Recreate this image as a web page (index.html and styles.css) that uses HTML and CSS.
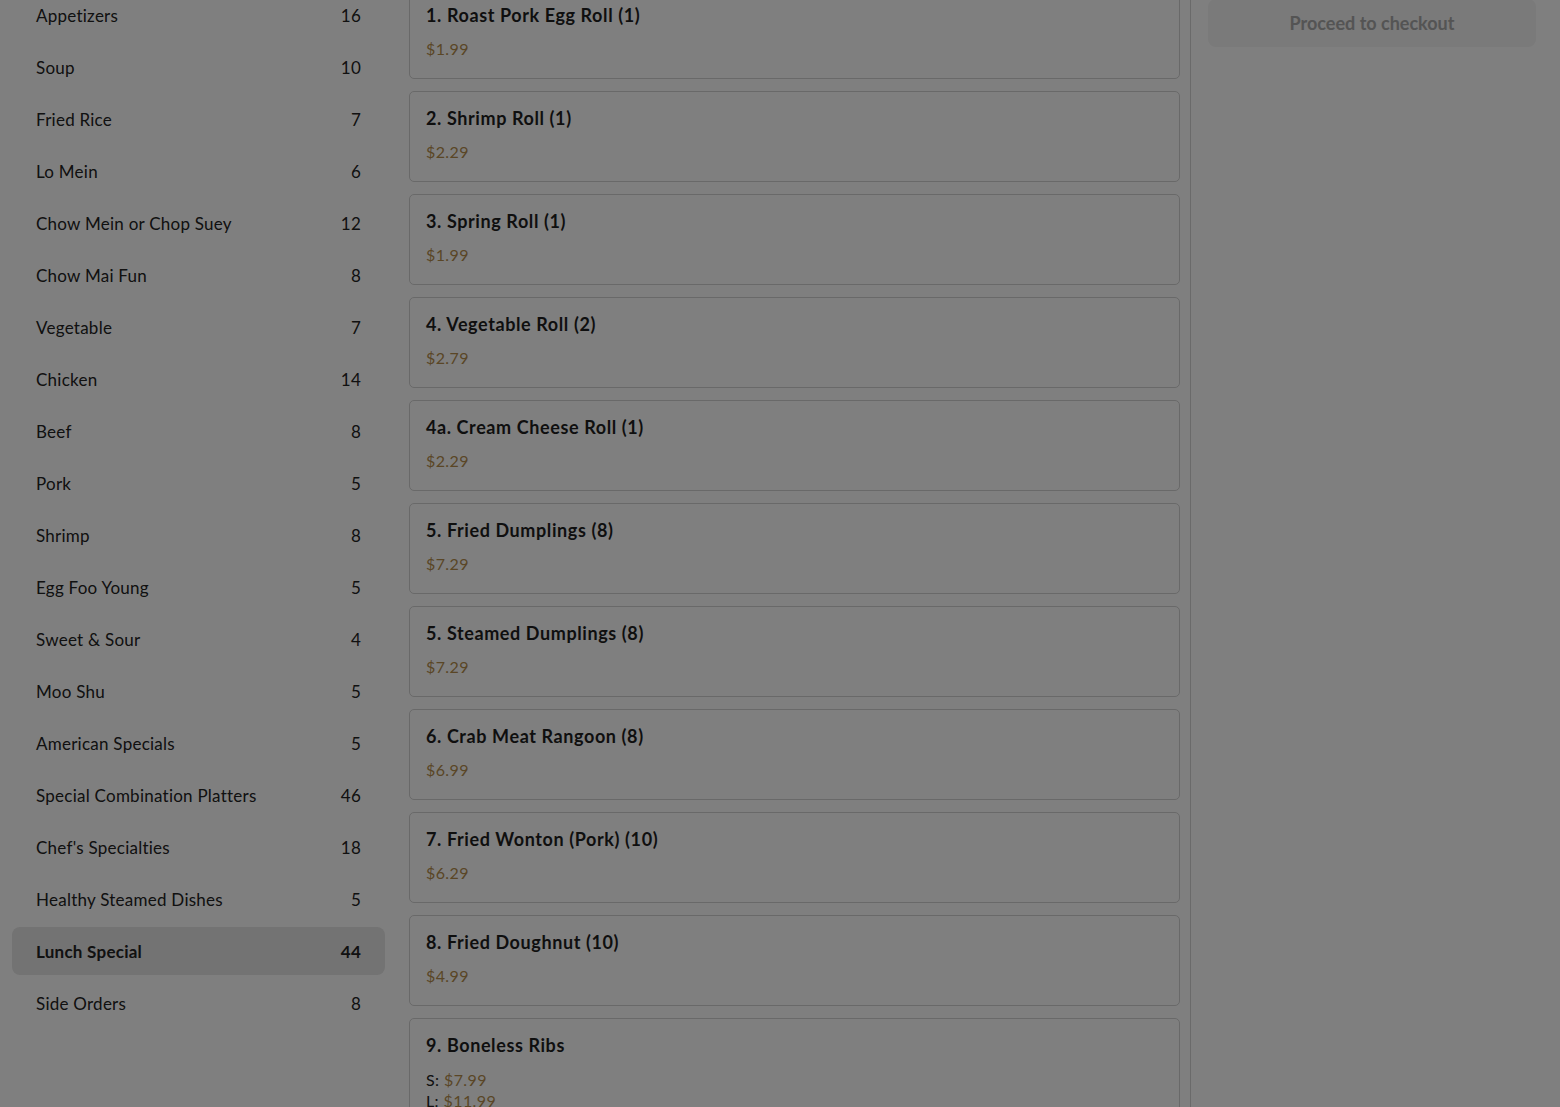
FILE: index.html
```html
<!DOCTYPE html>
<html lang="en">
<head>
<meta charset="utf-8">
<title>Menu</title>
<link rel="stylesheet" href="styles.css">
</head>
<body>
<div class="page">
  <aside class="sidebar">
    <ul class="cats">
      <li class="cat"><span>Appetizers</span><span>16</span></li>
      <li class="cat"><span>Soup</span><span>10</span></li>
      <li class="cat"><span>Fried Rice</span><span>7</span></li>
      <li class="cat"><span>Lo Mein</span><span>6</span></li>
      <li class="cat"><span>Chow Mein or Chop Suey</span><span>12</span></li>
      <li class="cat"><span>Chow Mai Fun</span><span>8</span></li>
      <li class="cat"><span>Vegetable</span><span>7</span></li>
      <li class="cat"><span>Chicken</span><span>14</span></li>
      <li class="cat"><span>Beef</span><span>8</span></li>
      <li class="cat"><span>Pork</span><span>5</span></li>
      <li class="cat"><span>Shrimp</span><span>8</span></li>
      <li class="cat"><span>Egg Foo Young</span><span>5</span></li>
      <li class="cat"><span>Sweet &amp; Sour</span><span>4</span></li>
      <li class="cat"><span>Moo Shu</span><span>5</span></li>
      <li class="cat"><span>American Specials</span><span>5</span></li>
      <li class="cat"><span>Special Combination Platters</span><span>46</span></li>
      <li class="cat"><span>Chef's Specialties</span><span>18</span></li>
      <li class="cat"><span>Healthy Steamed Dishes</span><span>5</span></li>
      <li class="cat active"><span>Lunch Special</span><span>44</span></li>
      <li class="cat"><span>Side Orders</span><span>8</span></li>
    </ul>
  </aside>
  <main class="items">
    <div class="card"><div class="title">1. Roast Pork Egg Roll (1)</div><div class="price">$1.99</div></div>
    <div class="card"><div class="title">2. Shrimp Roll (1)</div><div class="price">$2.29</div></div>
    <div class="card"><div class="title">3. Spring Roll (1)</div><div class="price">$1.99</div></div>
    <div class="card"><div class="title">4. Vegetable Roll (2)</div><div class="price">$2.79</div></div>
    <div class="card"><div class="title">4a. Cream Cheese Roll (1)</div><div class="price">$2.29</div></div>
    <div class="card"><div class="title">5. Fried Dumplings (8)</div><div class="price">$7.29</div></div>
    <div class="card"><div class="title">5. Steamed Dumplings (8)</div><div class="price">$7.29</div></div>
    <div class="card"><div class="title">6. Crab Meat Rangoon (8)</div><div class="price">$6.99</div></div>
    <div class="card"><div class="title">7. Fried Wonton (Pork) (10)</div><div class="price">$6.29</div></div>
    <div class="card"><div class="title">8. Fried Doughnut (10)</div><div class="price">$4.99</div></div>
    <div class="card"><div class="title">9. Boneless Ribs</div>
      <div class="sizes"><div>S: <span class="amt">$7.99</span></div><div>L: <span class="amt">$11.99</span></div></div>
    </div>
  </main>
  <section class="cart">
    <button class="checkout" type="button">Proceed to checkout</button>
  </section>
</div>
<div class="overlay"></div>
</body>
</html>
```
FILE: styles.css
```css
html, body {
  margin: 0;
  padding: 0;
  height: 100%;
  overflow: hidden;
}
body {
  background: #ffffff;
  font-family: "Lato", "Noto Sans", sans-serif;
  color: #222222;
}
.page {
  display: grid;
  grid-template-columns: 397px 794px 1fr;
  margin-top: -12px;
  height: 1200px;
}
.sidebar {
  padding: 3px 12px 0 12px;
}
.cats {
  list-style: none;
  margin: 0;
  padding: 0;
  display: flex;
  flex-direction: column;
  gap: 4px;
}
.cat {
  height: 48px;
  padding: 0 24px;
  border-radius: 8px;
  display: flex;
  align-items: center;
  justify-content: space-between;
  font-size: 17px;
  letter-spacing: 0.25px;
  color: #222222;
}
.cat.active {
  background: #e6e6e6;
  font-weight: 700;
}
.items {
  padding: 0 10px 0 12px;
  border-right: 1px solid #d4d4d4;
  display: flex;
  flex-direction: column;
  gap: 12px;
}
.card {
  border: 1px solid #d2d2d2;
  border-radius: 5px;
  padding: 16px 16px 18px 16px;
}
.title {
  font-size: 18px;
  font-weight: 700;
  line-height: 21px;
  letter-spacing: 0.6px;
  color: #1e1e1e;
}
.price {
  margin-top: 12px;
  font-size: 16px;
  line-height: 22px;
  letter-spacing: 0.4px;
  color: #b48d4c;
}
.sizes {
  margin-top: 13px;
  font-size: 16px;
  line-height: 21px;
  letter-spacing: 0.4px;
  color: #222222;
}
.amt {
  color: #b48d4c;
}
.cart {
  padding: 11px 24px 0 17px;
}
.checkout {
  width: 100%;
  height: 48px;
  border: none;
  border-radius: 8px;
  background: #f4f4f4;
  color: #a8a8a8;
  font-family: inherit;
  font-size: 18px;
  font-weight: 700;
}
.overlay {
  position: fixed;
  inset: 0;
  background: rgba(0, 0, 0, 0.5);
}
```
